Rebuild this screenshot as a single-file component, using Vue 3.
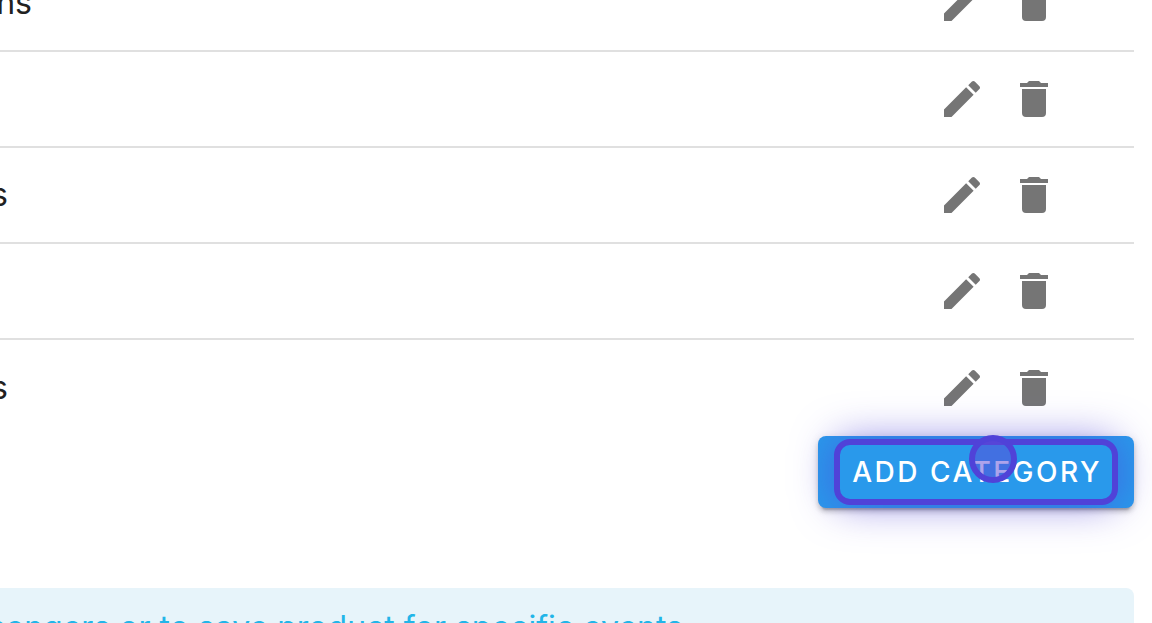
<script setup>
const rows = [
  { id: 1, tail: 'ns', wide: true },
  { id: 2, tail: '' },
  { id: 3, tail: 's' },
  { id: 4, tail: '' },
  { id: 5, tail: 's' },
]
</script>

<template>
  <main class="page">
    <ul class="list">
      <li v-for="row in rows" :key="row.id" class="row">
        <span class="name" :class="{ wide: row.wide }">{{ row.tail }}</span>
        <span class="actions">
          <button type="button" class="icon" aria-label="Edit">
            <svg viewBox="0 0 24 24"><path d="M20.71,7.04C21.1,6.65 21.1,6 20.71,5.63L18.37,3.29C18,2.9 17.35,2.9 16.96,3.29L15.12,5.12L18.87,8.87M3,17.25V21H6.75L17.81,9.93L14.06,6.18L3,17.25Z" /></svg>
          </button>
          <button type="button" class="icon" aria-label="Delete">
            <svg viewBox="0 0 24 24"><path d="M19,4H15.5L14.5,3H9.5L8.5,4H5V6H19M6,19A2,2 0 0,0 8,21H16A2,2 0 0,0 18,19V7H6V19Z" /></svg>
          </button>
        </span>
      </li>
    </ul>
    <div class="footer">
      <button type="button" class="add">
        ADD CATEGORY
        <span class="focus"></span>
        <span class="pointer"></span>
      </button>
    </div>
    <div class="alert"><span class="message">sengers or to save product for specific events</span></div>
  </main>
</template>

<style>
body {
  background: #fff;
  overflow: hidden;
}
</style>

<style scoped>
.page {
  height: 100vh;
  overflow: hidden;
  padding-right: 18px;
  box-sizing: border-box;
  font-family: Inter, "Liberation Sans", sans-serif;
}
.list {
  list-style: none;
  margin: -44px 0 0;
  padding: 0;
}
.row {
  display: flex;
  align-items: center;
  justify-content: space-between;
  height: 96px;
  box-sizing: border-box;
  border-bottom: 2px solid #e0e0e0;
}
.row:last-child {
  border-bottom: 0;
}
.name {
  display: flex;
  justify-content: flex-end;
  width: 8px;
  font-size: 32px;
  line-height: 40px;
  color: #212121;
}
.name.wide {
  width: 32px;
}
.actions {
  display: flex;
  gap: 24px;
  padding-right: 76px;
}
.icon {
  display: block;
  width: 48px;
  height: 48px;
  padding: 0;
  border: 0;
  background: none;
}
.icon svg {
  display: block;
  width: 48px;
  height: 48px;
  fill: #757575;
}
.footer {
  display: flex;
  justify-content: flex-end;
}
.add {
  position: relative;
  height: 72px;
  padding: 0 32px 0 34px;
  border: 0;
  border-radius: 8px;
  background: #2999eb;
  color: #fff;
  font-family: inherit;
  font-size: 28px;
  font-weight: 500;
  line-height: 40px;
  letter-spacing: 0.09em;
  white-space: nowrap;
  box-shadow: 0 6px 2px -4px rgba(0, 0, 0, 0.2), 0 4px 4px rgba(0, 0, 0, 0.14), 0 2px 10px rgba(0, 0, 0, 0.12);
}
.focus {
  position: absolute;
  inset: 3px 16px;
  box-sizing: border-box;
  border: 6px solid #5042d8;
  border-radius: 16px;
  box-shadow: 0 0 40px rgba(80, 66, 216, 0.6);
}
.pointer {
  position: absolute;
  left: 151px;
  top: -1px;
  width: 48px;
  height: 48px;
  box-sizing: border-box;
  border: 6px solid #5042d8;
  border-radius: 50%;
  background: rgba(92, 72, 216, 0.5);
}
.alert {
  display: flex;
  margin-top: 80px;
  padding: 16px 0;
  border-radius: 0 8px 8px 0;
  background: #e7f4fa;
  color: #22b5e8;
  font-size: 32px;
  line-height: 48px;
}
.message {
  display: flex;
  justify-content: flex-end;
  width: 683px;
  white-space: nowrap;
}
</style>
